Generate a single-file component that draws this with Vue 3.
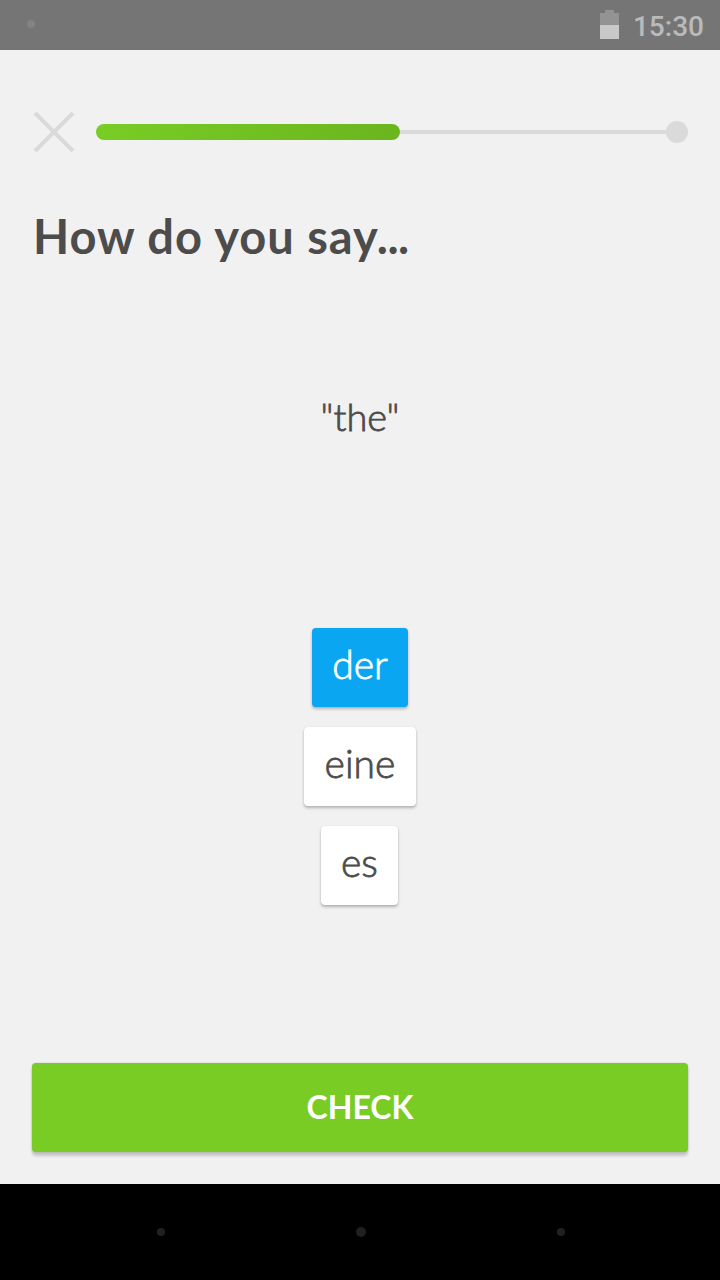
<script setup>
import { ref } from 'vue'

const options = ['der', 'eine', 'es']
const selected = ref('der')
const progress = ref(304 / 592)
</script>

<template>
  <div class="screen">
    <header class="status">
      <span class="notice"></span>
      <div class="system">
        <svg class="battery" width="19" height="29" viewBox="0 0 19 29">
          <path d="M0 3H5V0H14V3H19V15H0Z" fill="#939393" />
          <path d="M0 15H19V29H0Z" fill="#c9c9c9" />
        </svg>
        <span class="clock">15:30</span>
      </div>
    </header>

    <main class="lesson">
      <div class="top">
        <svg class="close" width="44" height="44" viewBox="0 0 44 44">
          <path d="M3 3L41 41M41 3L3 41" stroke="#dadada" stroke-width="4" fill="none" />
        </svg>
        <div class="track">
          <div class="fill" :style="{ width: progress * 100 + '%' }"></div>
          <div class="line"></div>
          <div class="goal"></div>
        </div>
      </div>

      <h1 class="title">How do you say<span class="ellipsis">...</span></h1>
      <p class="prompt">"the"</p>

      <div class="options">
        <button
          v-for="option in options"
          :key="option"
          :class="['option', option, { selected: option === selected }]"
          @click="selected = option"
        ><span>{{ option }}</span></button>
      </div>

      <button class="check"><span>CHECK</span></button>
    </main>

    <nav class="navbar">
      <span class="dot"></span>
      <span class="dot home"></span>
      <span class="dot"></span>
    </nav>
  </div>
</template>

<style>
body {
  margin: 0;
  background: #f1f1f1;
}
</style>

<style scoped>
.screen {
  display: flex;
  flex-direction: column;
  width: 720px;
  height: 1280px;
  overflow: hidden;
  background: #f1f1f1;
  color: #4c4c4c;
  font-family: Lato, "Open Sans", sans-serif;
}
.status {
  display: flex;
  align-items: center;
  justify-content: space-between;
  box-sizing: border-box;
  height: 50px;
  padding: 0 16px 0 27px;
  background: #757575;
}
.notice {
  width: 8px;
  height: 8px;
  margin-bottom: 2px;
  border-radius: 50%;
  background: #838383;
}
.system {
  display: flex;
  align-items: center;
}
.battery {
  margin: 0 14px 2px 0;
}
.clock {
  color: #bababa;
  font: 500 28px/34px Roboto, sans-serif;
  padding-top: 3px;
}
.lesson {
  display: flex;
  flex-direction: column;
  box-sizing: border-box;
  height: 1134px;
  padding: 60px 32px 32px;
}
.top {
  display: flex;
  align-items: center;
  height: 44px;
}
.close {
  flex: none;
  margin-right: 20px;
}
.track {
  display: flex;
  align-items: center;
  width: 592px;
}
.fill {
  flex: none;
  height: 16px;
  border-radius: 8px;
  background: linear-gradient(90deg, #78cd25, #6bb51f);
}
.line {
  flex: 1;
  height: 4px;
  background: #dadada;
}
.goal {
  width: 22px;
  height: 22px;
  margin-left: -1px;
  border-radius: 50%;
  background: #dadada;
}
.title {
  height: 60px;
  margin: 52px 0 0;
  padding-left: 1px;
  font-size: 47px;
  font-weight: 700;
  letter-spacing: 1px;
  line-height: 60px;
  white-space: nowrap;
}
.ellipsis {
  margin-left: -2px;
  letter-spacing: -0.5px;
}
.prompt {
  height: 50px;
  margin: 125px 0 0;
  font-size: 38px;
  font-weight: 300;
  line-height: 50px;
  text-align: center;
  -webkit-text-stroke: 0.8px currentColor;
}
.options {
  display: flex;
  flex-direction: column;
  align-items: center;
  gap: 20px;
  margin-top: 187px;
}
.option {
  width: 112px;
  height: 79px;
  padding: 0 0 8px;
  border: 0;
  border-radius: 4px;
  background: #fff;
  color: #4c4c4c;
  font: 300 39px/50px Lato, "Open Sans", sans-serif;
  -webkit-text-stroke: 0.8px currentColor;
  box-shadow: 0 2px 3px rgba(0, 0, 0, 0.26), 0 0 1px rgba(0, 0, 0, 0.15);
}
.option.der {
  width: 96px;
}
.option.es {
  width: 77px;
  margin-right: 1px;
}
.option.selected {
  background: #0ba6f2;
  color: #fff;
}
.check {
  flex: none;
  height: 89px;
  margin-top: auto;
  padding: 0 0 2px;
  border: 0;
  border-radius: 4px;
  background: #78cc24;
  color: #fff;
  font: 700 32px/40px Lato, "Open Sans", sans-serif;
  box-shadow: 0 4px 3px rgba(0, 0, 0, 0.18), 0 0 2px rgba(0, 0, 0, 0.18);
}
.navbar {
  display: flex;
  align-items: center;
  justify-content: space-between;
  box-sizing: border-box;
  height: 96px;
  padding: 0 155px 0 157px;
  background: #000;
}
.dot {
  width: 8px;
  height: 8px;
  border-radius: 50%;
  background: #202020;
}
.dot.home {
  width: 10px;
  height: 10px;
}
</style>
